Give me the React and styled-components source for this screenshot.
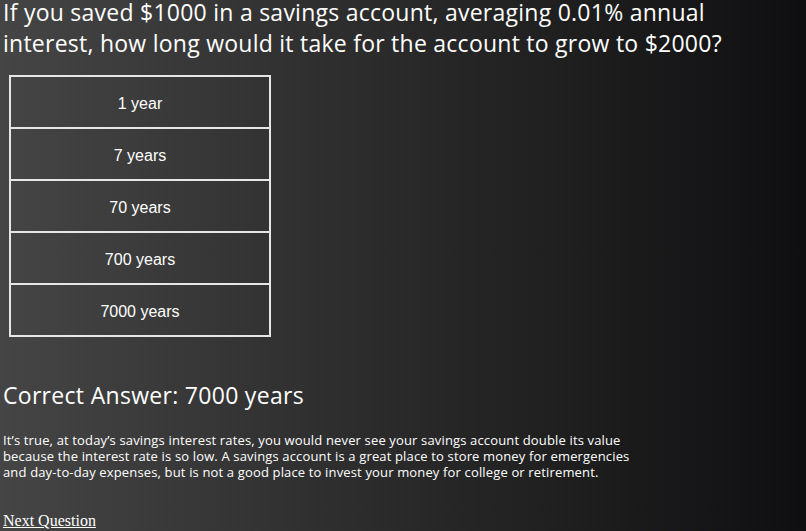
import React from "react";
import styled, { createGlobalStyle } from "styled-components";

const Global = createGlobalStyle`
  html, body { margin: 0; padding: 0; height: 100%; }
  body {
    background: linear-gradient(to right, #454545 0%, #2c2c2c 45%, #0f0f11 100%);
    color: #fff;
  }
  #root { min-height: 100%; }
`;

const Page = styled.div`
  padding: 0 3px;
  min-height: 531px;
  box-sizing: border-box;
`;

const Question = styled.h1`
  margin: -3px 0 0;
  font-family: "Open Sans", sans-serif;
  font-weight: 400;
  font-size: 23px;
  line-height: 31px;
  letter-spacing: 0.25px;
  color: #fff;
`;

const Choices = styled.div`
  margin: 16px 0 0 6px;
  width: 258px;
  display: flex;
  flex-direction: column;
  border: 2px solid #e6e6e6;
  border-bottom: none;
`;

const Choice = styled.div`
  height: 47px;
  padding-top: 3px;
  display: flex;
  align-items: center;
  justify-content: center;
  border-bottom: 2px solid #e6e6e6;
  font-family: "Liberation Sans", Arial, sans-serif;
  font-size: 16px;
  color: #fff;
`;

const Answer = styled.h2`
  margin: 43px 0 0;
  font-family: "Open Sans", sans-serif;
  font-weight: 400;
  font-size: 23px;
  line-height: 30px;
  letter-spacing: 0.3px;
  color: #fff;
`;

const Explanation = styled.p`
  margin: 22px 0 0;
  font-family: "Open Sans", sans-serif;
  font-size: 13px;
  line-height: 16px;
  letter-spacing: 0.15px;
  color: #fff;
  max-width: 680px;
`;

const Next = styled.a`
  display: inline-block;
  margin-top: 32px;
  font-family: "Liberation Serif", "Times New Roman", serif;
  font-size: 16px;
  line-height: 18px;
  color: #fff;
  text-decoration: underline;
`;

const choices = ["1 year", "7 years", "70 years", "700 years", "7000 years"];

export default function App() {
  return (
    <>
      <Global />
      <Page>
        <Question>
          If you saved $1000 in a savings account, averaging 0.01% annual
          <br />
          interest, how long would it take for the account to grow to $2000?
        </Question>
        <Choices>
          {choices.map((c) => (
            <Choice key={c}>{c}</Choice>
          ))}
        </Choices>
        <Answer>Correct Answer: 7000 years</Answer>
        <Explanation>
          It’s true, at today’s savings interest rates, you would never see your savings account double its value
          <br />
          because the interest rate is so low. A savings account is a great place to store money for emergencies
          <br />
          and day-to-day expenses, but is not a good place to invest your money for college or retirement.
        </Explanation>
        <Next href="#">Next Question</Next>
      </Page>
    </>
  );
}
